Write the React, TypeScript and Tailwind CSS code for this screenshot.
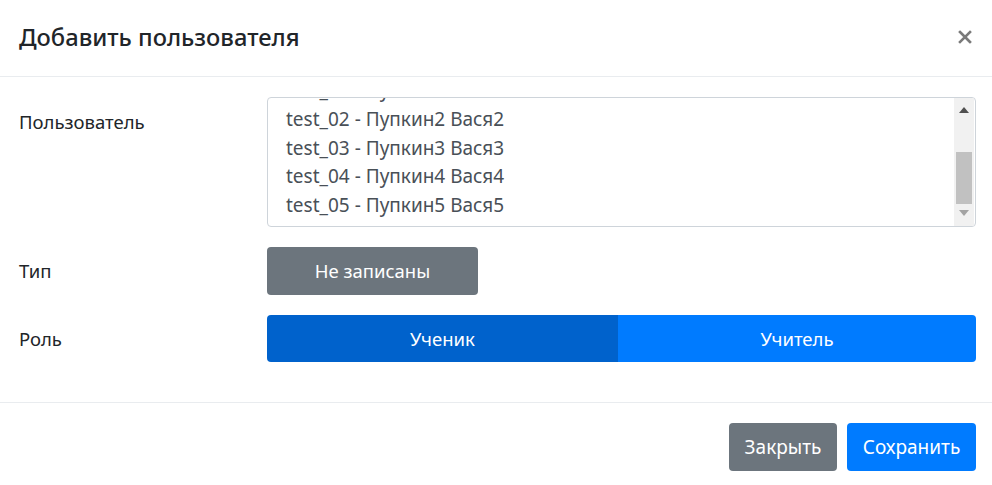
const users = [
  "test_01 - Пупкин1 Вася1",
  "test_02 - Пупкин2 Вася2",
  "test_03 - Пупкин3 Вася3",
  "test_04 - Пупкин4 Вася4",
  "test_05 - Пупкин5 Вася5",
];

const font = { fontFamily: '"Noto Sans", "Open Sans", sans-serif' };

const App = () => {
  return (
    <div
      className="w-[992px] h-[485px] bg-white flex flex-col overflow-hidden text-[#212529]"
      style={font}
    >
      {/* header */}
      <div className="h-[77px] shrink-0 border-b border-[#e9ecef] flex items-center justify-between pl-[19px] pr-[20px]">
        <h5 className="text-[23.7px] font-medium leading-[30px] pb-[2px]">Добавить пользователя</h5>
        <svg width="14" height="14" viewBox="0 0 14 14" className="mb-[3px]">
          <path d="M2 2 L12 12 M12 2 L2 12" stroke="#7a7a7a" strokeWidth="2.6" strokeLinecap="square" />
        </svg>
      </div>

      {/* body */}
      <div className="shrink-0 pl-[19px] pr-4 pt-5 pb-10 border-b border-[#e9ecef] grid grid-cols-[248px_1fr] gap-y-5 text-[18.5px]">
        <div className="pt-[11px] leading-[27px]">Пользователь</div>
        <div className="h-[130px] border border-[#ced4da] rounded-[4px] flex overflow-hidden">
          <div className="flex-1 overflow-hidden">
            <div className="mt-[-22px] pl-[18px] text-[#495057] text-[19px]">
              {users.map((u) => (
                <div key={u} className="h-[28.75px] leading-[28.75px] whitespace-nowrap">
                  {u}
                </div>
              ))}
            </div>
          </div>
          <div className="w-[20px] bg-[#f1f1f1] flex flex-col items-center mr-[1px]">
            <svg width="10" height="6" viewBox="0 0 10 6" className="mt-[9px]">
              <path d="M0 6 L5 0 L10 6 Z" fill="#505050" />
            </svg>
            <div className="w-[16px] h-[52px] bg-[#c1c1c1] mt-[39px]"></div>
            <svg width="10" height="6" viewBox="0 0 10 6" className="mt-[6px]">
              <path d="M0 0 L10 0 L5 6 Z" fill="#a3a3a3" />
            </svg>
          </div>
        </div>

        <div className="flex items-center">Тип</div>
        <div>
          <button className="w-[211px] h-[48px] rounded-[4px] bg-[#6c757d] text-white text-[18.5px]">
            Не записаны
          </button>
        </div>

        <div className="flex items-center">Роль</div>
        <div className="flex h-[47px] rounded-[4px] overflow-hidden text-white text-[18.5px]">
          <button className="w-[351px] bg-[#0062cc]">Ученик</button>
          <button className="flex-1 bg-[#007bff]">Учитель</button>
        </div>
      </div>

      {/* footer */}
      <div className="flex justify-end gap-[10px] pr-4 pt-5">
        <button className="w-[108px] h-[48px] rounded-[4px] bg-[#6c757d] text-white text-[19px]">
          Закрыть
        </button>
        <button className="w-[129px] h-[48px] rounded-[4px] bg-[#007bff] text-white text-[19px]">
          Сохранить
        </button>
      </div>
    </div>
  );
};

export default App;
